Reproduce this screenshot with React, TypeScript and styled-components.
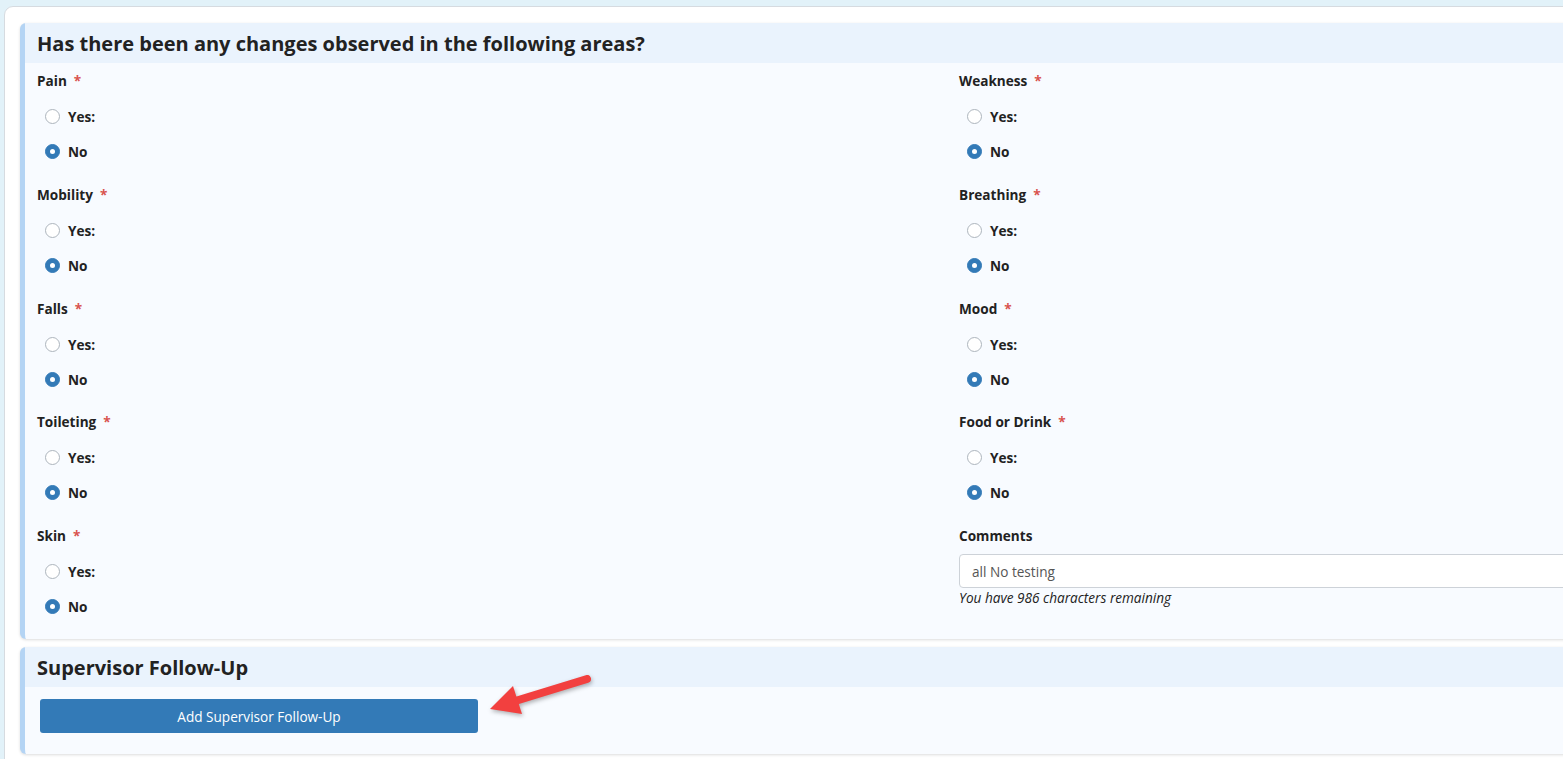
import React from "react";
import styled, { createGlobalStyle } from "styled-components";

const Global = createGlobalStyle`
  html, body { margin: 0; padding: 0; overflow: hidden; }
  body {
    background: #e2f2f9;
    font-family: "Open Sans", "Noto Sans", Arial, sans-serif;
    color: #222;
  }
  * { box-sizing: border-box; }
`;

const Page = styled.div`
  width: 1563px;
  height: 759px;
  overflow: hidden;
  padding: 6px 0 0 4px;
`;

const Card = styled.div`
  width: 1900px;
  min-height: 800px;
  background: #fff;
  border: 1px solid #d6dbe0;
  border-radius: 9px;
  padding: 16px 0 0 15px;
  display: flex;
  flex-direction: column;
  gap: 8px;
`;

const Section = styled.section`
  position: relative;
  background: #f8fbff;
  border-left: 5px solid #b4d4f4;
  border-radius: 6px 0 0 6px;
  box-shadow: 0 1px 3px rgba(0, 0, 0, 0.14);
`;

const SectionHeader = styled.h2`
  margin: 0;
  height: 40px;
  display: flex;
  align-items: center;
  padding-left: 12px;
  background: #eaf3fd;
  font-size: 20px;
  font-weight: 700;
  color: #222;
`;

const Body = styled.div`
  display: grid;
  grid-template-columns: 922px 1fr;
  padding: 8px 0 15px 12px;
`;

const Column = styled.div`
  display: flex;
  flex-direction: column;
  gap: 15.75px;
`;

const Field = styled.div`
  display: flex;
  flex-direction: column;
`;

const Label = styled.div`
  font-size: 13.6px;
  font-weight: 700;
  line-height: 20px;
  height: 20px;
  margin-bottom: 8px;
`;

const Star = styled.span`
  color: #d9534f;
  margin-left: 7px;
`;

const Option = styled.label`
  display: flex;
  align-items: center;
  height: 35px;
  padding-left: 8px;
  font-size: 13.6px;
  font-weight: 700;
  gap: 8px;
`;

const Radio = styled.span<{ $checked?: boolean }>`
  width: 15px;
  height: 15px;
  border-radius: 50%;
  flex: none;
  background: ${(p) => (p.$checked ? "#337ab7" : "#fff")};
  border: 1px solid ${(p) => (p.$checked ? "#337ab7" : "#adb5bd")};
  display: flex;
  align-items: center;
  justify-content: center;
  &::after {
    content: "";
    display: ${(p) => (p.$checked ? "block" : "none")};
    width: 5px;
    height: 5px;
    border-radius: 50%;
    background: #fff;
  }
`;

const Input = styled.div`
  height: 34px;
  border: 1px solid #cdd2d8;
  border-radius: 4px;
  background: #fff;
  display: flex;
  align-items: center;
  padding-left: 12px;
  font-size: 13.6px;
  color: #555;
`;

const Helper = styled.div`
  font-size: 13.6px;
  font-style: italic;
  color: #222;
  line-height: 20px;
`;

const FollowBody = styled.div`
  padding: 12px 0 21px 15px;
`;

const Button = styled.button`
  width: 438px;
  height: 34px;
  background: #337ab7;
  color: #fff;
  border: none;
  border-radius: 3px;
  font-family: "Open Sans", Arial, sans-serif;
  font-size: 13.6px;
  cursor: pointer;
`;

const Arrow = styled.svg`
  position: absolute;
  left: 460px;
  top: 18px;
  overflow: visible;
  filter: drop-shadow(1px 2px 2px rgba(0, 0, 0, 0.3));
`;

type Q = { name: string };

const RadioField = ({ name }: Q) => (
  <Field>
    <Label>
      {name}
      <Star>*</Star>
    </Label>
    <Option>
      <Radio />
      Yes:
    </Option>
    <Option>
      <Radio $checked />
      No
    </Option>
  </Field>
);

const left = ["Pain", "Mobility", "Falls", "Toileting", "Skin"];
const right = ["Weakness", "Breathing", "Mood", "Food or Drink"];

export default function App() {
  return (
    <>
      <Global />
      <Page>
        <Card>
          <Section>
            <SectionHeader>Has there been any changes observed in the following areas?</SectionHeader>
            <Body>
              <Column>
                {left.map((n) => (
                  <RadioField key={n} name={n} />
                ))}
              </Column>
              <Column>
                {right.map((n) => (
                  <RadioField key={n} name={n} />
                ))}
                <Field>
                  <Label>Comments</Label>
                  <Input>all No testing</Input>
                  <Helper>You have 986 characters remaining</Helper>
                </Field>
              </Column>
            </Body>
          </Section>
          <Section>
            <SectionHeader>Supervisor Follow-Up</SectionHeader>
            <FollowBody>
              <Button>Add Supervisor Follow-Up</Button>
            </FollowBody>
            <Arrow width="110" height="60" viewBox="485 665 110 60">
              <line x1="587" y1="679" x2="512" y2="702" stroke="#f2403f" strokeWidth="8" strokeLinecap="round" />
              <polygon points="490,709 513,686 522,714" fill="#f2403f" />
            </Arrow>
          </Section>
        </Card>
      </Page>
    </>
  );
}
